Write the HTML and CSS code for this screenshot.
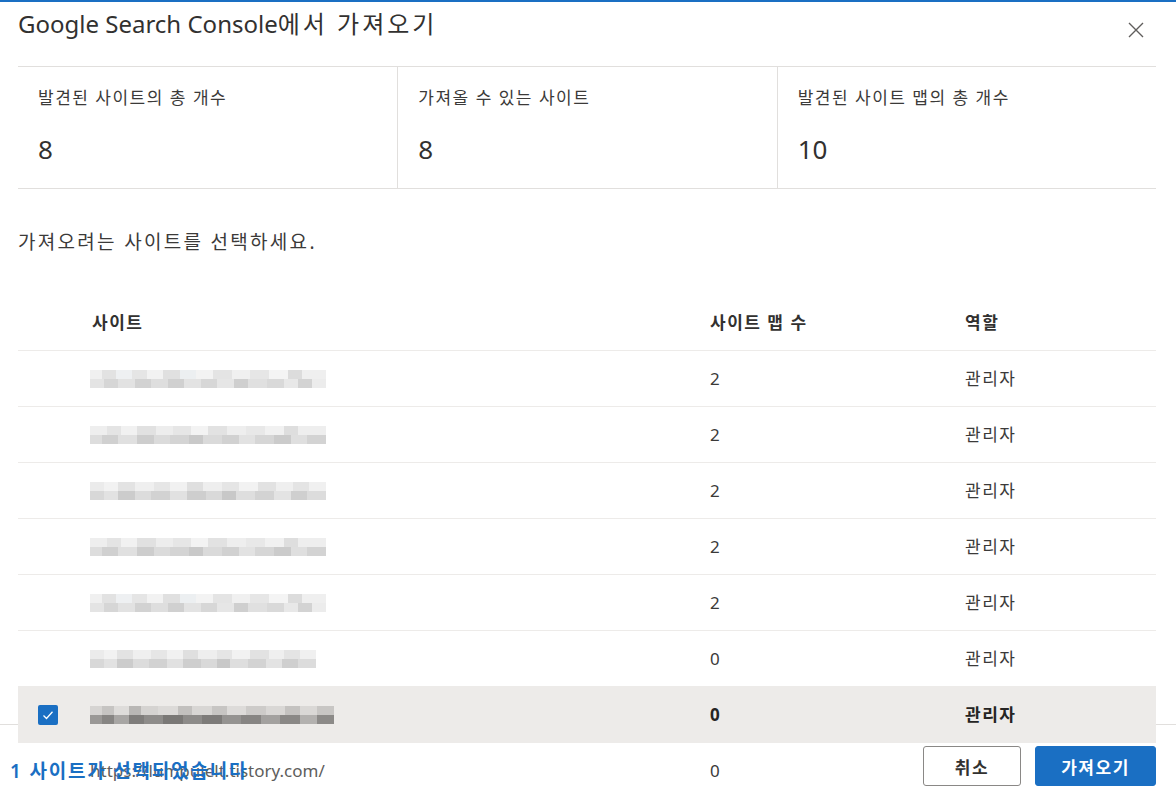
FILE: index.html
```html
<!DOCTYPE html>
<html lang="ko">
<head>
<meta charset="utf-8">
<title>Google Search Console에서 가져오기</title>
<link rel="stylesheet" href="styles.css">
</head>
<body>
<div class="dialog">
  <header class="head">
    <h1 class="title"><span class="latin">Google Search Console</span><span class="ko">에서 가져오기</span></h1>
    <button class="close" aria-label="닫기">
      <svg width="16" height="16" viewBox="0 0 16 16"><path d="M1 1 L15 15 M15 1 L1 15" stroke="#605e5c" stroke-width="1.4" fill="none"/></svg>
    </button>
  </header>

  <section class="stats">
    <div class="stat">
      <div class="stat-label">발견된 사이트의 총 개수</div>
      <div class="stat-value">8</div>
    </div>
    <div class="stat">
      <div class="stat-label">가져올 수 있는 사이트</div>
      <div class="stat-value">8</div>
    </div>
    <div class="stat">
      <div class="stat-label">발견된 사이트 맵의 총 개수</div>
      <div class="stat-value">10</div>
    </div>
  </section>

  <p class="hint">가져오려는 사이트를 선택하세요.</p>

  <div class="table">
    <div class="row head-row">
      <div class="cell"></div>
      <div class="cell">사이트</div>
      <div class="cell">사이트 맵 수</div>
      <div class="cell">역할</div>
    </div>
    <div class="row">
      <div class="cell"></div>
      <div class="cell"><span class="blur b1"></span></div>
      <div class="cell">2</div>
      <div class="cell">관리자</div>
    </div>
    <div class="row">
      <div class="cell"></div>
      <div class="cell"><span class="blur b2"></span></div>
      <div class="cell">2</div>
      <div class="cell">관리자</div>
    </div>
    <div class="row">
      <div class="cell"></div>
      <div class="cell"><span class="blur b3"></span></div>
      <div class="cell">2</div>
      <div class="cell">관리자</div>
    </div>
    <div class="row">
      <div class="cell"></div>
      <div class="cell"><span class="blur b2"></span></div>
      <div class="cell">2</div>
      <div class="cell">관리자</div>
    </div>
    <div class="row">
      <div class="cell"></div>
      <div class="cell"><span class="blur b1"></span></div>
      <div class="cell">2</div>
      <div class="cell">관리자</div>
    </div>
    <div class="row">
      <div class="cell"></div>
      <div class="cell"><span class="blur b3 short"></span></div>
      <div class="cell">0</div>
      <div class="cell">관리자</div>
    </div>
    <div class="row selected">
      <div class="cell">
        <span class="check">
          <svg width="14" height="14" viewBox="0 0 14 14"><path d="M2.5 7.5 L5.5 10.5 L11.5 3.8" stroke="#fff" stroke-width="1.3" fill="none"/></svg>
        </span>
      </div>
      <div class="cell"><span class="blur dark"></span></div>
      <div class="cell">0</div>
      <div class="cell">관리자</div>
    </div>
    <div class="row">
      <div class="cell"></div>
      <div class="cell url">https://lumpulelt.tistory.com/</div>
      <div class="cell">0</div>
      <div class="cell">관리자</div>
    </div>
  </div>

  <footer class="foot">
    <span class="selected-count">1 사이트가 선택되었습니다</span>
    <div class="actions">
      <button class="btn">취소</button>
      <button class="btn primary">가져오기</button>
    </div>
  </footer>
</div>
</body>
</html>
```

FILE: styles.css
```css
* { box-sizing: border-box; }

html, body {
  margin: 0;
  padding: 0;
  background: #fff;
  overflow: hidden;
}

body {
  font-family: "Noto Sans", "Noto Sans CJK KR", sans-serif;
  color: #323130;
  letter-spacing: 1.5px;
}

.dialog {
  width: 1176px;
  height: 794px;
  border-top: 2px solid #1a6fc3;
  padding: 0 20px 0 18px;
  position: relative;
  overflow: hidden;
}

.head {
  display: flex;
  justify-content: space-between;
  align-items: flex-start;
  padding-top: 6px;
  height: 64px;
}

.title {
  margin: 0;
  font-size: 24px;
  line-height: 32px;
  font-weight: 400;
  color: #323130;
}

.title .latin {
  letter-spacing: 0;
}

.title .ko {
  letter-spacing: 3px;
}

.close {
  border: 0;
  background: none;
  padding: 0;
  margin: 10px 8px 0 0;
  width: 24px;
  height: 24px;
  display: flex;
  align-items: center;
  justify-content: center;
}

.stats {
  display: grid;
  grid-template-columns: repeat(3, 1fr);
  border-top: 1px solid #e1dfdd;
  border-bottom: 1px solid #e1dfdd;
  height: 123px;
}

.stat {
  padding: 19px 20px 0 20px;
}

.stat + .stat {
  border-left: 1px solid #e1dfdd;
}

.stat-label {
  font-size: 17px;
  line-height: 24px;
  color: #3b3a39;
}

.stat-value {
  margin-top: 22px;
  font-size: 26px;
  line-height: 34px;
  color: #323130;
  letter-spacing: 0;
}

.hint {
  margin: 39px 0 39px 0;
  font-size: 19px;
  line-height: 28px;
  color: #3b3a39;
  letter-spacing: 2.3px;
}

.table {
  display: flex;
  flex-direction: column;
}

.row {
  display: grid;
  grid-template-columns: 72px 620px 255px 1fr;
  height: 56px;
  border-bottom: 1px solid #edebe9;
  align-items: center;
  font-size: 17px;
  color: #3b3a39;
}

.head-row {
  font-weight: 700;
  color: #323130;
}

.head-row .cell:nth-child(2) {
  padding-left: 2px;
}

.row.selected {
  background: #edebe9;
  position: relative;
  z-index: 1;
  font-weight: 700;
  color: #252423;
  border-bottom-color: transparent;
}

.cell {
  line-height: 24px;
}

.cell:first-child {
  padding-left: 20px;
  display: flex;
  align-items: center;
}

.check {
  width: 20px;
  height: 20px;
  border-radius: 2px;
  background: #1a6fc3;
  display: flex;
  align-items: center;
  justify-content: center;
}

.url {
  font-weight: 400;
  color: #605e5c;
  letter-spacing: 0;
}

.blur {
  display: block;
  width: 236px;
  height: 18px;
  filter: blur(0.7px);
  background:
    linear-gradient(90deg, #f0f0f0 0 5%, #e2e2e2 5% 11%, #eef0f2 11% 18%, #e5e5e5 18% 24%, #f2f2f2 24% 31%, #e0e0e0 31% 38%, #eceff1 38% 45%, #f3f3f3 45% 52%, #e4e4e4 52% 60%, #f0f0f0 60% 68%, #e6e6e6 68% 76%, #f4f4f4 76% 84%, #dcdcdc 84% 90%, #efefef 90% 100%) top / 100% 50% no-repeat,
    linear-gradient(90deg, #e4e4e4 0 6%, #d6d6d6 6% 12%, #e2e2e2 12% 19%, #d2d2d2 19% 26%, #dedede 26% 33%, #d0d0d0 33% 40%, #e3e3e3 40% 47%, #d7d7d7 47% 54%, #e6e6e6 54% 61%, #cfcfcf 61% 67%, #e0e0e0 67% 75%, #d9d9d9 75% 82%, #e8e8e8 82% 88%, #d3d3d3 88% 94%, #ececec 94% 100%) bottom / 100% 50% no-repeat;
}

.blur.b2 {
  background:
    linear-gradient(90deg, #eeeeee 0 7%, #e4e4e4 7% 13%, #f1f1f1 13% 20%, #e1e1e1 20% 28%, #ededed 28% 35%, #e6e6e6 35% 43%, #f3f3f3 43% 50%, #e2e2e2 50% 58%, #eeeeee 58% 66%, #e8e8e8 66% 74%, #f1f1f1 74% 82%, #dedede 82% 88%, #eeeeee 88% 100%) top / 100% 50% no-repeat,
    linear-gradient(90deg, #dddddd 0 5%, #d0d0d0 5% 12%, #e0e0e0 12% 20%, #cdcdcd 20% 27%, #dbdbdb 27% 34%, #d4d4d4 34% 42%, #c9c9c9 42% 48%, #dadada 48% 56%, #d1d1d1 56% 63%, #e2e2e2 63% 70%, #d6d6d6 70% 78%, #cbcbcb 78% 85%, #dfdfdf 85% 92%, #d3d3d3 92% 100%) bottom / 100% 50% no-repeat;
}

.blur.b3 {
  background:
    linear-gradient(90deg, #ebebeb 0 6%, #f2f2f2 6% 12%, #e3e3e3 12% 19%, #efefef 19% 27%, #e6e6e6 27% 34%, #f1f1f1 34% 41%, #dfdfdf 41% 48%, #eeeeee 48% 56%, #e5e5e5 56% 63%, #f2f2f2 63% 71%, #e2e2e2 71% 79%, #efefef 79% 86%, #e4e4e4 86% 93%, #f0f0f0 93% 100%) top / 100% 50% no-repeat,
    linear-gradient(90deg, #d8d8d8 0 6%, #e2e2e2 6% 12%, #cccccc 12% 19%, #dcdcdc 19% 26%, #d2d2d2 26% 34%, #e1e1e1 34% 41%, #cecece 41% 49%, #d9d9d9 49% 56%, #c8c8c8 56% 62%, #dedede 62% 70%, #d3d3d3 70% 78%, #e3e3e3 78% 85%, #cfcfcf 85% 92%, #dcdcdc 92% 100%) bottom / 100% 50% no-repeat;
}

.blur.short {
  width: 226px;
}

.blur.dark {
  width: 244px;
  background:
    linear-gradient(90deg, #d6d4d2 0 5%, #c6c4c2 5% 10%, #dedcda 10% 16%, #b9b7b5 16% 21%, #d5d3d1 21% 28%, #dcdad8 28% 36%, #c2c0be 36% 42%, #d8d6d4 42% 50%, #c7c5c3 50% 56%, #dddbd9 56% 64%, #cdcbc9 64% 72%, #d9d7d5 72% 80%, #c4c2c0 80% 86%, #dad8d6 86% 93%, #c8c6c4 93% 100%) top / 100% 50% no-repeat,
    linear-gradient(90deg, #9a9896 0 5%, #878583 5% 10%, #a8a6a4 10% 16%, #7f7d7b 16% 22%, #8e8c8a 22% 30%, #7a7876 30% 38%, #8d8b89 38% 46%, #7d7b79 46% 54%, #959391 54% 62%, #878583 62% 70%, #a3a19f 70% 78%, #8a8886 78% 86%, #b3b1af 86% 93%, #8c8a88 93% 100%) bottom / 100% 50% no-repeat;
}

.foot {
  position: absolute;
  top: 722px;
  left: 0;
  right: 0;
  bottom: 0;
  border-top: 1px solid #e1dfdd;
  display: flex;
  justify-content: space-between;
  align-items: flex-start;
  padding: 21px 20px 0 10px;
}

.selected-count {
  font-size: 19px;
  line-height: 26px;
  font-weight: 600;
  color: #1a6fc3;
  margin-top: 12px;
  letter-spacing: 1.8px;
}

.actions {
  display: flex;
  gap: 14px;
  position: relative;
  z-index: 2;
}

.btn {
  font-family: "Noto Sans", "Noto Sans CJK KR", sans-serif;
  font-size: 17px;
  font-weight: 700;
  letter-spacing: 1.5px;
  height: 40px;
  border-radius: 3px;
  border: 1px solid #8a8886;
  background: #fff;
  color: #323130;
  width: 98px;
  padding: 0;
}

.btn.primary {
  width: 121px;
  background: #1a6fc3;
  border-color: #1a6fc3;
  color: #fff;
}
```
